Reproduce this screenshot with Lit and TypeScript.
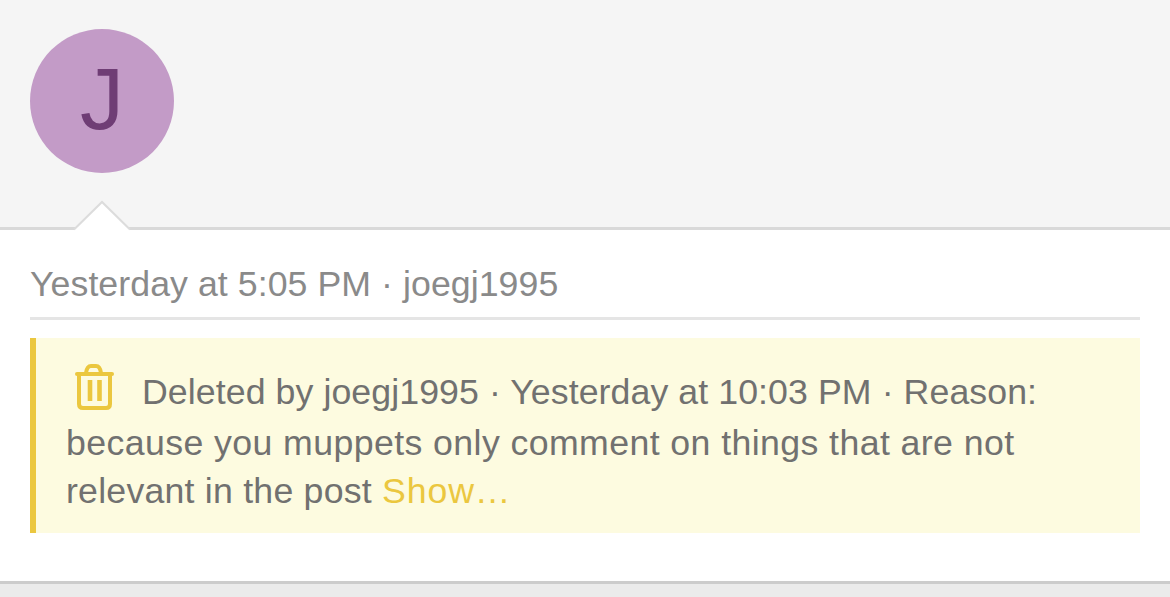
import { LitElement, html, css } from "lit";
import { customElement } from "lit/decorators.js";

@customElement("app-root")
export class AppRoot extends LitElement {
  static styles = css`
    :host {
      display: flex;
      flex-direction: column;
      width: 1170px;
      height: 597px;
      overflow: hidden;
      background: #ebebeb;
      font-family: "Liberation Sans", Arial, sans-serif;
    }
    .head {
      height: 227px;
      box-sizing: border-box;
      padding: 29px 30px 0;
      background: #f5f5f5;
      position: relative;
      flex: none;
    }
    .avatar {
      width: 144px;
      height: 144px;
      border-radius: 50%;
      background: #c39bc7;
      color: #6f3d75;
      font-size: 88px;
      font-weight: 400;
      display: flex;
      align-items: center;
      justify-content: center;
      padding-bottom: 4px;
      box-sizing: border-box;
    }
    .caret {
      position: absolute;
      left: 72px;
      top: 199px;
      display: block;
    }
    .card {
      flex: none;
      height: 357px;
      box-sizing: border-box;
      background: #fff;
      border-top: 3px solid #d9d9d9;
      border-bottom: 3px solid #cccccc;
      padding: 33px 30px 0;
    }
    .meta {
      font-size: 35.7px;
      letter-spacing: 0.06px;
      line-height: 42px;
      color: #8a8a8a;
      padding-bottom: 12px;
      border-bottom: 3px solid #e5e5e5;
    }
    .notice {
      margin-top: 18px;
      height: 195px;
      box-sizing: border-box;
      background: #fdfbe0;
      border-left: 6px solid #ebc73f;
      padding: 26px 30px 0 30px;
      font-size: 35.7px;
      line-height: 48px;
      color: #717170;
      letter-spacing: 0.08px;
    }
    .notice svg {
      display: inline-block;
      width: 42px;
      height: 46px;
      margin: 0 26px 9px 8px;
      vertical-align: -15px;
    }
    .rest {
      letter-spacing: 0.4px;
    }
    .last {
      letter-spacing: 0.22px;
    }
    .show {
      color: #ebc73f;
      letter-spacing: 0.9px;
    }
  `;

  render() {
    return html`
      <div class="head">
        <div class="avatar">J</div>
        <svg class="caret" width="60" height="32" viewBox="0 0 60 32">
          <path d="M2 31 L30 3 L58 31 Z" fill="#fff"></path>
          <path d="M2 30.5 L30 3 L58 30.5" fill="none" stroke="#dcdcdc" stroke-width="2"></path>
        </svg>
      </div>
      <div class="card">
        <div class="meta">Yesterday at 5:05 PM · joegj1995</div>
        <div class="notice">
          <svg viewBox="0 0 42 46" fill="none" stroke="#ebc73f" stroke-width="4" stroke-linecap="round" stroke-linejoin="round">
            <path d="M3 10 H38"></path>
            <path d="M5 10 V40 Q5 44 9 44 H32 Q36 44 36 40 V10"></path>
            <path d="M12 9 Q13 2 17 2 H22 Q26 2 27 9"></path>
            <path d="M16 16 V37 M25.5 16 V37" stroke-width="4.6" stroke-linecap="butt"></path>
          </svg>Deleted by joegj1995 · Yesterday at 10:03 PM · Reason: <span class="rest">because you muppets only comment on things that are not</span> <span class="last">relevant in the post</span> <span class="show">Show…</span>
        </div>
      </div>
    `;
  }
}
